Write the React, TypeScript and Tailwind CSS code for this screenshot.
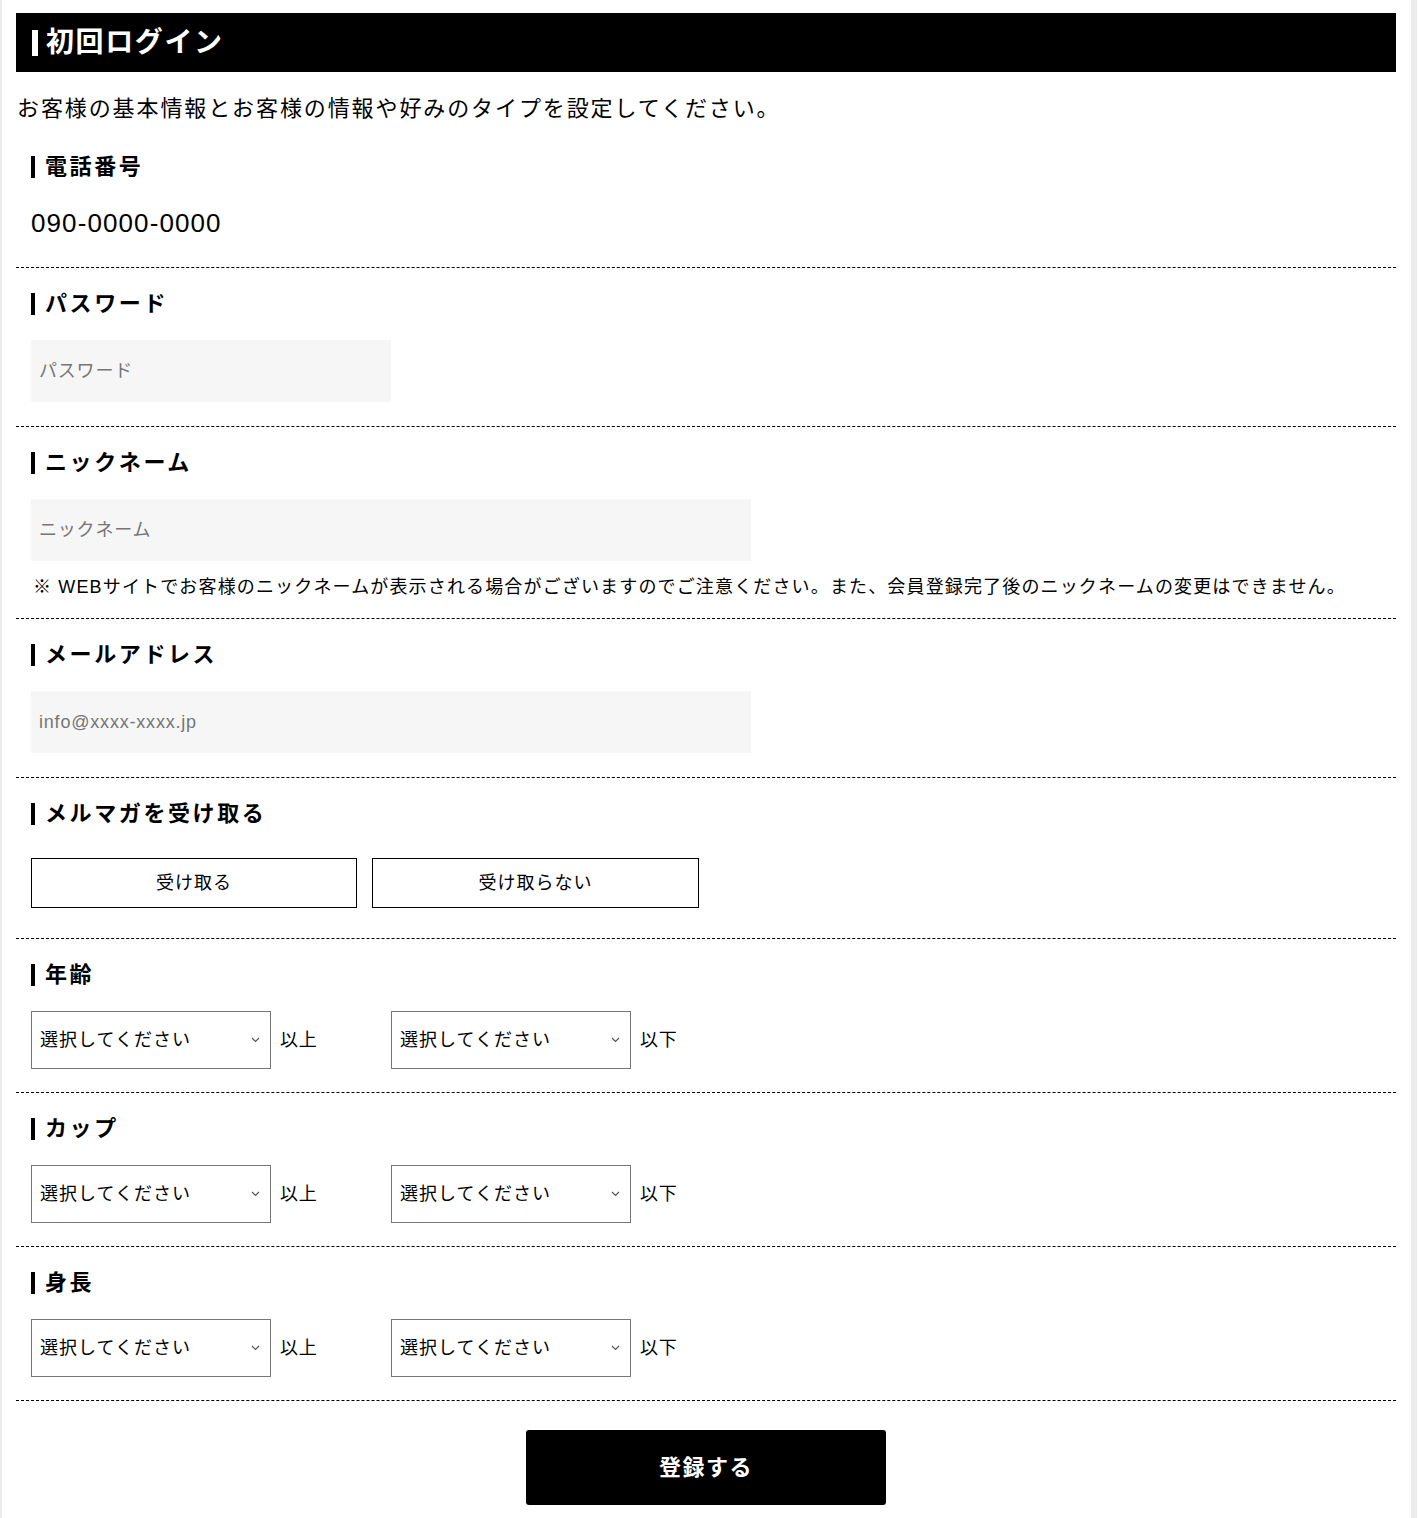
import React from "react";

const font = {
  fontFamily: '"Liberation Sans", "Noto Sans CJK JP", sans-serif',
};

function Label({ children }: { children: React.ReactNode }) {
  return (
    <div className="flex items-center gap-[10px] mb-6">
      <span className="w-[4px] h-[22px] bg-black" />
      <span className="text-[22px] leading-[24px] font-bold tracking-[2.6px] text-black">
        {children}
      </span>
    </div>
  );
}

function Section({
  children,
  className = "pb-6",
}: {
  children: React.ReactNode;
  className?: string;
}) {
  return (
    <section
      className={`px-[15px] pt-6 border-b border-dashed border-black ${className}`}
    >
      {children}
    </section>
  );
}

function Chevron() {
  return (
    <svg
      className="pointer-events-none absolute right-[11px] top-1/2 -translate-y-1/2"
      width="9"
      height="6"
      viewBox="0 0 9 6"
      fill="none"
    >
      <path d="M1 1l3.5 3.5L8 1" stroke="#555" strokeWidth="1.2" />
    </svg>
  );
}

function RangeSelect({ suffix }: { suffix: string }) {
  return (
    <div className="flex items-center w-[360px]">
      <div className="relative w-[240px] h-[58px]">
        <select
          defaultValue=""
          className="appearance-none w-full h-full border border-[#767676] bg-white pl-[8px] text-[18px] tracking-[1px] text-black outline-none"
        >
          <option value="">選択してください</option>
        </select>
        <Chevron />
      </div>
      <span className="ml-[9px] text-[18px] tracking-[0.8px] text-black">
        {suffix}
      </span>
    </div>
  );
}

function RangeRow() {
  return (
    <div className="flex">
      <RangeSelect suffix="以上" />
      <RangeSelect suffix="以下" />
    </div>
  );
}

const inputCls =
  "h-[62px] bg-[#f6f6f6] pl-[8px] text-[18px] tracking-[0.8px] text-black placeholder:text-[#757575] outline-none";

export default function App() {
  return (
    <div className="flex min-h-screen bg-white text-black" style={font}>
      <main className="flex-1 border-l-2 border-[#ececec] pl-[14px] pr-[15px] pt-[13px] pb-[14px]">
        <header className="flex items-center gap-[8px] h-[59px] bg-black pl-[16px]">
          <span className="w-[6px] h-[26px] bg-white" />
          <h1 className="text-[28px] font-bold tracking-[1.6px] text-white leading-none">
            初回ログイン
          </h1>
        </header>

        <p className="mt-[23px] mb-[8px] pl-px text-[22px] leading-[28px] tracking-[1.9px]">
          お客様の基本情報とお客様の情報や好みのタイプを設定してください。
        </p>

        <Section>
          <Label>電話番号</Label>
          <div className="text-[26px] leading-[40px] tracking-[1.1px]">
            090-0000-0000
          </div>
        </Section>

        <Section>
          <Label>パスワード</Label>
          <input
            type="password"
            placeholder="パスワード"
            className={`${inputCls} w-[360px] block`}
          />
        </Section>

        <Section className="pb-[20px]">
          <Label>ニックネーム</Label>
          <input
            type="text"
            placeholder="ニックネーム"
            className={`${inputCls} w-[720px] block`}
          />
          <p className="mt-[15px] pl-[2px] text-[18px] leading-[22px] tracking-[1.15px]">
            ※ WEBサイトでお客様のニックネームが表示される場合がございますのでご注意ください。また、会員登録完了後のニックネームの変更はできません。
          </p>
        </Section>

        <Section>
          <Label>メールアドレス</Label>
          <input
            type="email"
            placeholder="info@xxxx-xxxx.jp"
            className={`${inputCls} w-[720px] block`}
          />
        </Section>

        <Section>
          <Label>メルマガを受け取る</Label>
          <div className="flex gap-[15px] pt-[8px] pb-[6px]">
            <button
              type="button"
              className="w-[326px] h-[50px] border border-black bg-white text-[18px] tracking-[1px]"
            >
              受け取る
            </button>
            <button
              type="button"
              className="w-[327px] h-[50px] border border-black bg-white text-[18px] tracking-[1px]"
            >
              受け取らない
            </button>
          </div>
        </Section>

        <Section className="pb-[23px]">
          <Label>年齢</Label>
          <RangeRow />
        </Section>

        <Section className="pb-[23px]">
          <Label>カップ</Label>
          <RangeRow />
        </Section>

        <Section className="pb-[23px]">
          <Label>身長</Label>
          <RangeRow />
        </Section>

        <div className="flex justify-center mt-[29px]">
          <button
            type="button"
            className="w-[360px] h-[75px] rounded-[3px] bg-black text-white text-[22px] font-bold tracking-[1.5px]"
          >
            登録する
          </button>
        </div>
      </main>
      <div className="w-[6px] bg-[#ececec] mr-px" />
    </div>
  );
}
